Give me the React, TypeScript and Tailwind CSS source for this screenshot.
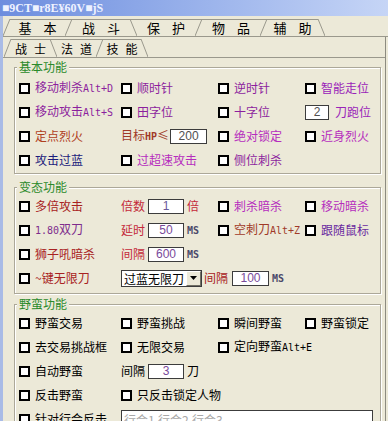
import type { ReactNode } from "react";

const PURPLE = "text-[#8c1f9e]";
const VIOLET = "text-[#9a24b8]";
const MAGENTA = "text-[#b62dbe]";
const ORANGE = "text-[#b0401e]";
const BROWN = "text-[#a03a28]";
const NAVY = "text-[#1c1c7c]";
const DARKRED = "text-[#a82222]";
const RED = "text-[#c42a3a]";
const PLUM = "text-[#7e2c8c]";
const INDIGO = "text-[#6a2aa0]";
const BLACK = "text-black";

const LINE = "#9a988c";

function A({ children }: { children: ReactNode }) {
    return <span className="font-['DejaVu_Sans_Mono',monospace] text-[10px]">{children}</span>;
}

function Box() {
    return <span className="block w-[11px] h-[11px] shrink-0 border-2 border-black bg-white" />;
}

function Check({ children, color = BLACK }: { children: ReactNode; color?: string }) {
    return (
        <div className="flex items-center gap-[5px]">
            <Box />
            <span className={"whitespace-nowrap " + color}>{children}</span>
        </div>
    );
}

function Field({ value, w, color = "text-[#505050]" }: { value: string; w: string; color?: string }) {
    return (
        <input
            readOnly
            value={value}
            className={
                "h-[15px] shrink-0 border border-[#3c3c3c] bg-white px-0 text-center text-[12px] leading-[13px] font-['Liberation_Sans',sans-serif] outline-none " +
                w +
                " " +
                color
            }
        />
    );
}

function Ms() {
    return <span className="text-[#4a4a6a] font-bold"><A>MS</A></span>;
}

function Slant({ dir, top = true, h = 18 }: { dir: "l" | "r"; top?: boolean; h?: number }) {
    return (
        <svg width="7" height={h} className="block shrink-0">
            {top && <line x1="0" y1="0.5" x2="7" y2="0.5" stroke={LINE} />}
            {dir === "l" ? (
                <line x1="0" y1={h} x2="7" y2="0" stroke={LINE} />
            ) : (
                <line x1="0" y1="0" x2="7" y2={h} stroke={LINE} />
            )}
        </svg>
    );
}

function Tab({ a, b, w, gap }: { a: string; b: string; w: string; gap: string }) {
    return (
        <div className={"flex items-center justify-center border-t border-[#9a988c] " + w + " " + gap}>
            <span>{a}</span>
            <span>{b}</span>
        </div>
    );
}

function Row({ children }: { children: ReactNode }) {
    return (
        <div className="grid grid-cols-[102px_97px_87px_1fr] h-[24px] items-center pl-[4px] leading-[14px]">
            {children}
        </div>
    );
}

function Group({ title, className, children }: { title: string; className: string; children: ReactNode }) {
    return (
        <fieldset
            className={
                "ml-[11px] mr-[4px] border border-[#aca899] shadow-[1px_1px_0_#fff,inset_1px_1px_0_#fff] " + className
            }
        >
            <legend className="ml-[2px] px-[2px] text-[12px] leading-[14px] text-[#2a8a2a] bg-[#ece9d8]">{title}</legend>
            {children}
        </fieldset>
    );
}

function Select() {
    return (
        <div className="flex h-[17px] w-[81px] shrink-0 border border-[#3c3c3c] bg-white">
            <span className="flex-1 pl-[2px] leading-[15px] text-black">过蓝无限刀</span>
            <span className="flex w-[15px] items-center justify-center bg-[#ece9d8] border-t border-l border-t-white border-l-white border-r border-b border-r-[#716f64] border-b-[#716f64]">
                <svg width="7" height="4">
                    <path d="M0 0h7L3.5 4z" fill="#000" />
                </svg>
            </span>
        </div>
    );
}

export default function App() {
    return (
        <div className="relative flex h-[421px] w-[388px] flex-col overflow-hidden bg-[#ece9d8] font-['Noto_Sans_CJK_SC',sans-serif] text-[12px] text-black">
            <div className="h-[16px] shrink-0 bg-gradient-to-r from-[#6d8dde] to-[#c6d5f6] pl-[2px] font-['Liberation_Serif',serif] text-[12px] font-bold leading-[16px] text-[#eef2ff]">
                ■9CT■r8E¥60V■jS
            </div>
            <div className="flex min-h-0 flex-1">
                <div className="w-[3px] shrink-0 bg-[#a9bbe6]" />
                <div className="flex min-w-0 flex-1 flex-col">
                    <div className="pt-[3px]">
                        <div className="flex h-[18px] border-b border-[#9a988c] text-[13px] leading-[16px]">
                            <Slant dir="l" top={false} h={17} />
                            <Tab a="基" b="本" w="w-[55px]" gap="gap-[12px]" />
                            <Slant dir="l" h={17} />
                            <Tab a="战" b="斗" w="w-[58px]" gap="gap-[12px]" />
                            <Slant dir="r" h={17} />
                            <Tab a="保" b="护" w="w-[58px]" gap="gap-[12px]" />
                            <Slant dir="l" h={17} />
                            <Tab a="物" b="品" w="w-[58px]" gap="gap-[12px]" />
                            <Slant dir="l" h={17} />
                            <Tab a="辅" b="助" w="w-[51px]" gap="gap-[12px]" />
                            <Slant dir="r" top={false} h={17} />
                        </div>
                    </div>
                    <div className="mr-[2px] flex flex-1 flex-col border-r border-[#8d8b80]">
                        <div className="mt-[2px] flex h-[19px] border-b border-[#9a988c] pl-[1px] text-[12px] leading-[16px]">
                            <Slant dir="l" top={false} />
                            <Tab a="战" b="士" w="w-[39px]" gap="gap-[7px]" />
                            <Slant dir="r" />
                            <Tab a="法" b="道" w="w-[39px]" gap="gap-[7px]" />
                            <Slant dir="l" />
                            <Tab a="技" b="能" w="w-[38px]" gap="gap-[7px]" />
                            <Slant dir="r" top={false} />
                        </div>

                        <Group title="基本功能" className="mt-[2px] pt-[2px] pb-[1px]">
                            <Row>
                                <Check color={PURPLE}>移动刺杀<A>Alt+D</A></Check>
                                <Check color={PURPLE}>顺时针</Check>
                                <Check color={PURPLE}>逆时针</Check>
                                <Check color={VIOLET}>智能走位</Check>
                            </Row>
                            <Row>
                                <Check color={PURPLE}>移动攻击<A>Alt+S</A></Check>
                                <Check color={PURPLE}>田字位</Check>
                                <Check color={PURPLE}>十字位</Check>
                                <div className="flex items-center">
                                    <Field value="2" w="w-[24px]" />
                                    <span className={"ml-[6px] " + VIOLET}>刀跑位</span>
                                </div>
                            </Row>
                            <Row>
                                <Check color={ORANGE}>定点烈火</Check>
                                <div className="flex items-center">
                                    <span className={"whitespace-nowrap " + BROWN}>
                                        目标<span className="font-bold"><A>HP</A></span>≤
                                    </span>
                                    <span className="ml-[1px]">
                                        <Field value="200" w="w-[37px]" />
                                    </span>
                                </div>
                                <Check color={MAGENTA}>绝对锁定</Check>
                                <Check color={MAGENTA}>近身烈火</Check>
                            </Row>
                            <Row>
                                <Check color={NAVY}>攻击过蓝</Check>
                                <Check color={MAGENTA}>过超速攻击</Check>
                                <Check color={PURPLE}>侧位刺杀</Check>
                            </Row>
                        </Group>

                        <Group title="变态功能" className="mt-[6px] pb-[3px]">
                            <Row>
                                <Check color={DARKRED}>多倍攻击</Check>
                                <div className="flex items-center gap-[3px]">
                                    <span className={RED}>倍数</span>
                                    <Field value="1" w="w-[36px]" color="text-[#6a5a9a]" />
                                    <span className={RED}>倍</span>
                                </div>
                                <Check color={MAGENTA}>刺杀暗杀</Check>
                                <Check color={MAGENTA}>移动暗杀</Check>
                            </Row>
                            <Row>
                                <Check color={PLUM}><A>1.80</A>双刀</Check>
                                <div className="flex items-center gap-[3px]">
                                    <span className={RED}>延时</span>
                                    <Field value="50" w="w-[36px]" color="text-[#7a4a9a]" />
                                    <Ms />
                                </div>
                                <Check color={BROWN}>空刺刀<A>Alt+Z</A></Check>
                                <Check color={INDIGO}>跟随鼠标</Check>
                            </Row>
                            <Row>
                                <Check color={DARKRED}>狮子吼暗杀</Check>
                                <div className="flex items-center gap-[3px]">
                                    <span className={RED}>间隔</span>
                                    <Field value="600" w="w-[36px]" color="text-[#7a4a9a]" />
                                    <Ms />
                                </div>
                            </Row>
                            <Row>
                                <Check color={DARKRED}>~键无限刀</Check>
                                <div className="col-span-3 flex items-center">
                                    <Select />
                                    <span className={"ml-[2px] " + DARKRED}>间隔</span>
                                    <span className="ml-[4px]">
                                        <Field value="100" w="w-[37px]" color="text-[#7a4a9a]" />
                                    </span>
                                    <span className="ml-[3px]">
                                        <Ms />
                                    </span>
                                </div>
                            </Row>
                        </Group>

                        <Group title="野蛮功能" className="mt-[3px]">
                            <Row>
                                <Check>野蛮交易</Check>
                                <Check>野蛮挑战</Check>
                                <Check>瞬间野蛮</Check>
                                <Check>野蛮锁定</Check>
                            </Row>
                            <Row>
                                <Check>去交易挑战框</Check>
                                <Check>无限交易</Check>
                                <Check>定向野蛮<A>Alt+E</A></Check>
                            </Row>
                            <Row>
                                <Check>自动野蛮</Check>
                                <div className="flex items-center gap-[3px]">
                                    <span>间隔</span>
                                    <Field value="3" w="w-[36px]" color="text-[#7a4a9a]" />
                                    <span>刀</span>
                                </div>
                            </Row>
                            <Row>
                                <Check>反击野蛮</Check>
                                <div className="col-span-3">
                                    <Check>只反击锁定人物</Check>
                                </div>
                            </Row>
                            <Row>
                                <Check>针对行会反击</Check>
                                <div className="col-span-3">
                                    <input
                                        readOnly
                                        placeholder="行会1,行会2,行会3"
                                        className="block h-[18px] w-[252px] border border-[#3c3c3c] bg-white px-[2px] text-[12px] leading-[16px] text-black outline-none placeholder:text-[#a8a8a8]"
                                    />
                                </div>
                            </Row>
                        </Group>
                    </div>
                </div>
            </div>
        </div>
    );
}
